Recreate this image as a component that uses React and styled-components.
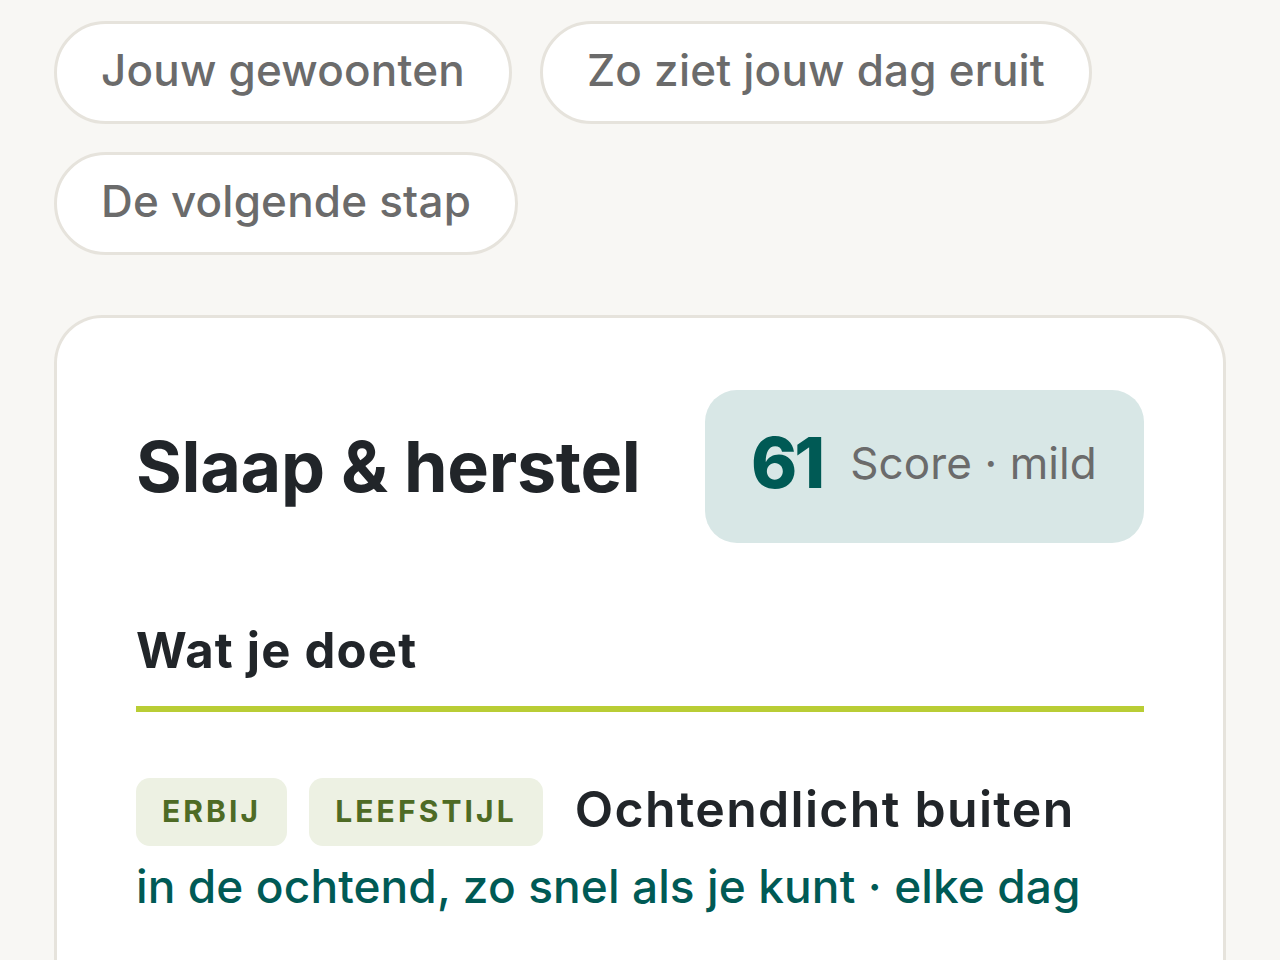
import React from 'react'
import styled, { createGlobalStyle } from 'styled-components'

const GlobalStyle = createGlobalStyle`
  html, body {
    margin: 0;
    padding: 0;
    background: #f8f7f4;
    font-family: Inter, "Noto Sans", "Liberation Sans", sans-serif;
  }
`;

const Page = styled.div`
  padding: 21px 54px 0 54px;
  display: flex;
  flex-direction: column;
  gap: 60px;
`;

const PillRow = styled.div`
  display: flex;
  flex-wrap: wrap;
  gap: 28px 28px;
  max-width: 1100px;
`;

const Pill = styled.button`
  height: 103px;
  padding: 0 44px 6px 44px;
  border: 3px solid #e6e3dc;
  border-radius: 52px;
  background: #ffffff;
  color: #6b6b6b;
  font-family: inherit;
  font-size: 44px;
  font-weight: 500;
  letter-spacing: 0.2px;
  white-space: nowrap;
  cursor: pointer;
`;

const Card = styled.section`
  background: #ffffff;
  border: 3px solid #e6e3dc;
  border-bottom: none;
  border-radius: 48px 48px 0 0;
  padding: 72px 79px 60px 79px;
  min-height: 600px;
`;

const Header = styled.div`
  display: flex;
  align-items: center;
  justify-content: space-between;
`;

const Title = styled.h2`
  margin: 0;
  font-size: 70px;
  font-weight: 700;
  color: #212529;
  letter-spacing: -0.3px;
  line-height: 1;
`;

const ScoreBox = styled.div`
  flex-shrink: 0;
  width: 439px;
  height: 153px;
  box-sizing: border-box;
  padding: 0 0 8px 46px;
  border-radius: 32px;
  background: #d8e7e6;
  display: flex;
  align-items: center;
  gap: 28px;
  white-space: nowrap;
`;

const ScoreValue = styled.span`
  font-size: 70px;
  font-weight: 800;
  color: #005a55;
  letter-spacing: -3px;
`;

const ScoreLabel = styled.span`
  font-size: 44px;
  font-weight: 400;
  color: #6b6b6b;
  letter-spacing: 0.1px;
`;

const SectionTitle = styled.h3`
  margin: 79px 0 0 0;
  padding-bottom: 25px;
  border-bottom: 6px solid #b9cd35;
  font-size: 49px;
  font-weight: 700;
  color: #212529;
  line-height: 1.2;
  letter-spacing: 1.2px;
`;

const Habit = styled.div`
  margin-top: 66px;
`;

const HabitHead = styled.div`
  display: flex;
  align-items: center;
  gap: 22px;
`;

const Tag = styled.span`
  height: 66px;
  padding: 0 26px 2px 26px;
  border-radius: 14px;
  background: #edf1e3;
  color: #4e6b25;
  font-size: 30px;
  font-weight: 700;
  letter-spacing: 3.1px;
  display: flex;
  align-items: center;
`;

const HabitName = styled.span`
  margin-left: 10px;
  padding-bottom: 6px;
  font-size: 50px;
  font-weight: 600;
  color: #212529;
  letter-spacing: 1.3px;
`;

const HabitWhen = styled.p`
  margin: 12px 0 0 0;
  font-size: 46px;
  font-weight: 500;
  color: #005a55;
  letter-spacing: 0.1px;
`;

export default function App() {
  return (
    <>
      <GlobalStyle />
      <Page>
        <PillRow>
          <Pill>Jouw gewoonten</Pill>
          <Pill>Zo ziet jouw dag eruit</Pill>
          <Pill>De volgende stap</Pill>
        </PillRow>
        <Card>
          <Header>
            <Title>Slaap &amp; herstel</Title>
            <ScoreBox>
              <ScoreValue>61</ScoreValue>
              <ScoreLabel>Score · mild</ScoreLabel>
            </ScoreBox>
          </Header>
          <SectionTitle>Wat je doet</SectionTitle>
          <Habit>
            <HabitHead>
              <Tag>ERBIJ</Tag>
              <Tag>LEEFSTIJL</Tag>
              <HabitName>Ochtendlicht buiten</HabitName>
            </HabitHead>
            <HabitWhen>in de ochtend, zo snel als je kunt · elke dag</HabitWhen>
          </Habit>
        </Card>
      </Page>
    </>
  )
}
